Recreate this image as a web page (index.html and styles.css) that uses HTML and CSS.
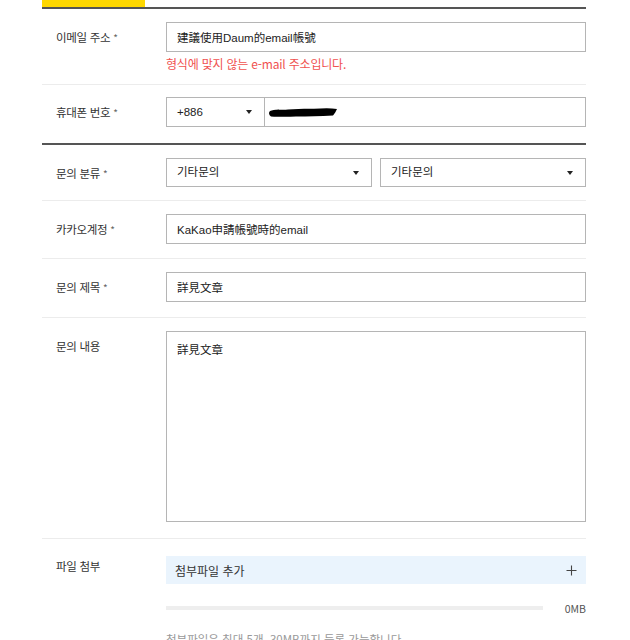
FILE: index.html
```html
<!DOCTYPE html>
<html lang="ko">
<head>
<meta charset="utf-8">
<title>문의하기</title>
<link rel="stylesheet" href="styles.css">
</head>
<body>
<form class="form">
  <div class="tabs"><span class="tab-active"></span></div>

  <div class="row row-email">
    <div class="label">이메일 주소 <span class="req">*</span></div>
    <div class="field">
      <input class="input" type="text" value="建議使用Daum的email帳號">
      <p class="error">형식에 맞지 않는 e-mail 주소입니다.</p>
    </div>
  </div>

  <div class="row section-end">
    <div class="label">휴대폰 번호 <span class="req">*</span></div>
    <div class="field phone">
      <div class="select select-code"><span class="select-text">+886</span></div>
      <div class="input phone-number">
        <svg class="redact" width="70" height="11" viewBox="0 0 70 11">
          <path d="M2 4 C6 2 14 3 20 2.4 C28 2 38 1.6 46 1.8 C54 1.4 62 1 69 2 C68 4 67 6.4 65 8.4 C52 9.4 40 9 28 9.6 C18 10 9 9.8 3 9.4 C0.8 8.2 0.4 5.6 2 4 Z" fill="#000"/>
        </svg>
      </div>
    </div>
  </div>

  <div class="row row-pair">
    <div class="label">문의 분류 <span class="req">*</span></div>
    <div class="field pair">
      <div class="select"><span class="select-text">기타문의</span></div>
      <div class="select"><span class="select-text">기타문의</span></div>
    </div>
  </div>

  <div class="row">
    <div class="label">카카오계정 <span class="req">*</span></div>
    <div class="field">
      <input class="input" type="text" value="KaKao申請帳號時的email">
    </div>
  </div>

  <div class="row row-title">
    <div class="label">문의 제목 <span class="req">*</span></div>
    <div class="field">
      <input class="input" type="text" value="詳見文章">
    </div>
  </div>

  <div class="row row-content">
    <div class="label">문의 내용</div>
    <div class="field">
      <textarea class="textarea">詳見文章</textarea>
    </div>
  </div>

  <div class="row row-file">
    <div class="label label-top">파일 첨부</div>
    <div class="field">
      <div class="attach">
        <span>첨부파일 추가</span>
        <svg class="plus" width="11" height="11" viewBox="0 0 11 11">
          <path d="M5.5 0.5 V10.5 M0.5 5.5 H10.5" stroke="#444" stroke-width="1.1" fill="none"/>
        </svg>
      </div>
      <div class="usage">
        <div class="usage-track"><div class="usage-fill" style="width:0%"></div></div>
        <span class="usage-text">0MB</span>
      </div>
      <p class="note">첨부파일은 최대 5개, 30MB까지 등록 가능합니다.</p>
    </div>
  </div>
</form>
</body>
</html>
```

FILE: styles.css
```css
html, body {
  margin: 0;
  padding: 0;
  background: #fff;
}

body {
  font-family: "Noto Sans CJK KR", "Noto Sans", sans-serif;
  font-size: 12px;
  color: #333;
  overflow: hidden;
}

.form {
  width: 544px;
  margin-left: 42px;
}

/* tab strip with the active tab highlighted */
.tabs {
  display: flex;
  border-bottom: 2px solid #555;
}

.tab-active {
  width: 103px;
  height: 7px;
  background: #ffd800;
}

/* form rows */
.row {
  display: flex;
  padding: 13px 0 13px;
  border-bottom: 1px solid #ececec;
}

.row.section-end {
  border-bottom: 2px solid #555;
  padding-top: 12px;
  padding-bottom: 15px;
}

.row-email {
  padding-bottom: 11px;
}

.row-pair {
  padding-bottom: 11px;
}

.row-title {
  padding-bottom: 14px;
}

.row-content {
  padding-bottom: 16px;
}

.label {
  flex: none;
  width: 110px;
  padding-left: 14px;
  line-height: 30px;
  font-size: 11.5px;
  color: #333;
  letter-spacing: -0.3px;
}

.label-top {
  line-height: 16px;
  padding-top: 2px;
}

.req {
  color: #666;
  font-size: 10px;
}

.field {
  flex: 1;
  min-width: 0;
}

.input {
  display: block;
  box-sizing: border-box;
  width: 100%;
  height: 30px;
  margin: 0;
  padding: 0 10px;
  border: 1px solid #b5b5b5;
  border-radius: 0;
  background: #fff;
  font-family: "Liberation Sans", "Noto Sans CJK KR", sans-serif;
  font-size: 11.5px;
  color: #222;
  outline: none;
}

.error {
  margin: 3px 0 0;
  line-height: 18px;
  font-size: 12px;
  color: #f0524f;
  letter-spacing: -0.2px;
}

/* phone: country code + number */
.phone {
  display: flex;
}

.select {
  position: relative;
  box-sizing: border-box;
  height: 30px;
  padding: 0 10px;
  border: 1px solid #b5b5b5;
  background: #fff;
  line-height: 28px;
  font-family: "Liberation Sans", "Noto Sans CJK KR", sans-serif;
  font-size: 11.5px;
  color: #222;
}

.select::after {
  content: "";
  position: absolute;
  right: 12px;
  top: 12px;
  border-left: 3px solid transparent;
  border-right: 3px solid transparent;
  border-top: 4px solid #222;
}

.select-code {
  flex: none;
  width: 99px;
}

.phone-number {
  flex: 1;
  margin-left: -1px;
  display: flex;
  align-items: center;
  padding-left: 3px;
}

.redact {
  display: block;
  margin-top: 1px;
}

/* two category selects */
.pair {
  display: flex;
  gap: 8px;
}

.pair .select {
  flex: 1;
  height: 29px;
  line-height: 27px;
}

.textarea {
  display: block;
  box-sizing: border-box;
  width: 100%;
  height: 191px;
  margin: 0;
  padding: 9px 10px;
  border: 1px solid #b5b5b5;
  border-radius: 0;
  resize: none;
  font-family: "Liberation Sans", "Noto Sans CJK KR", sans-serif;
  font-size: 11.5px;
  line-height: 18px;
  color: #222;
  outline: none;
}

/* attachments */
.row-file {
  padding-top: 17px;
  border-bottom: none;
}

.attach {
  display: flex;
  align-items: center;
  justify-content: space-between;
  height: 28px;
  padding: 0 9px 0 9px;
  background: #eaf4fd;
  font-size: 12px;
  color: #333;
}

.plus {
  display: block;
}

.usage {
  display: flex;
  align-items: center;
  margin-top: 17px;
  height: 14px;
}

.usage-track {
  width: 377px;
  height: 4px;
  background: #eeeeee;
}

.usage-fill {
  height: 100%;
  background: #ffd800;
}

.usage-text {
  margin-left: auto;
  font-size: 10.5px;
  color: #555;
}

.note {
  margin: 16px 0 0;
  font-size: 11.5px;
  color: #999;
}
```
